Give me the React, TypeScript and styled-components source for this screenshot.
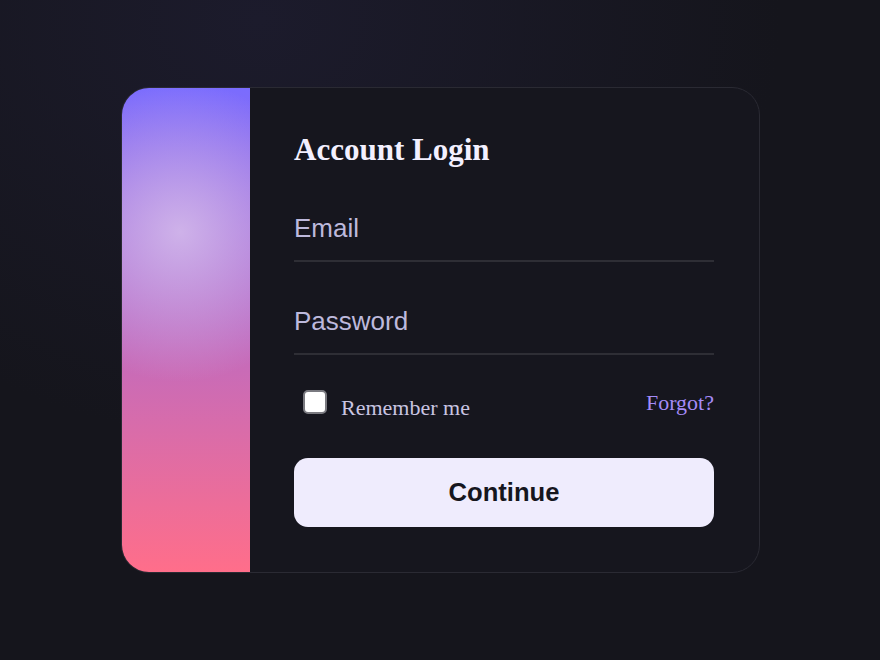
import React from "react";
import styled, { createGlobalStyle } from "styled-components";

const GlobalStyle = createGlobalStyle`
  html, body {
    margin: 0;
    padding: 0;
    height: 100%;
  }
  body {
    background: #15151c;
    font-family: "Liberation Serif", "Times New Roman", serif;
  }
  #root {
    min-height: 100%;
  }
`;

const Page = styled.main`
  width: 880px;
  height: 660px;
  display: flex;
  align-items: center;
  justify-content: center;
  background:
    radial-gradient(ellipse 520px 420px at 260px 20px, #1c1b2c 0%, rgba(28, 27, 44, 0) 100%),
    #15151c;
`;

const Card = styled.section`
  width: 637px;
  display: flex;
  border: 1px solid #2a2a33;
  border-radius: 28px;
  overflow: hidden;
  background: #16161e;
  margin-left: 1px;
`;

const Accent = styled.div`
  width: 128px;
  flex-shrink: 0;
  background:
    radial-gradient(circle 150px at 58px 144px, rgba(214, 190, 236, 0.85) 0%, rgba(214, 190, 236, 0) 100%),
    linear-gradient(180deg, #7a6cfe 0%, #c66bb9 56%, #ff6e8a 100%);
`;

const Form = styled.form`
  flex: 1;
  display: flex;
  flex-direction: column;
  padding: 43px 45px 45px 44px;
`;

const Title = styled.h1`
  margin: 0;
  font-family: "Liberation Serif", "Times New Roman", serif;
  font-size: 31px;
  font-weight: 700;
  line-height: 38px;
  color: #f3f0ff;
`;

const Field = styled.input<{ $gap: number }>`
  display: block;
  width: 100%;
  box-sizing: border-box;
  margin: ${(p) => p.$gap}px 0 0;
  padding: 14px 0 17px;
  border: none;
  border-bottom: 2px solid #2e2e35;
  background: transparent;
  font-family: "Liberation Sans", Arial, sans-serif;
  font-size: 26px;
  line-height: 30px;
  color: #f3f0ff;
  outline: none;

  &::placeholder {
    color: #bdb9dc;
    opacity: 1;
  }
`;

const OptionsRow = styled.div`
  display: flex;
  align-items: flex-start;
  justify-content: space-between;
  margin-top: 35px;
`;

const Remember = styled.label`
  display: flex;
  align-items: flex-start;
  gap: 14px;
  cursor: pointer;
`;

const Check = styled.input`
  appearance: none;
  width: 24px;
  height: 24px;
  margin: 0 0 0 9px;
  box-sizing: border-box;
  border: 2px solid #7a7a80;
  border-radius: 5px;
  background: #ffffff;
`;

const RememberText = styled.span`
  margin-top: 5px;
  font-size: 22px;
  line-height: 25px;
  color: #c9c5e2;
`;

const Forgot = styled.a`
  font-size: 22px;
  line-height: 25px;
  color: #a58bf8;
  text-decoration: none;
`;

const Submit = styled.button`
  margin-top: 38px;
  height: 69px;
  border: none;
  border-radius: 14px;
  background: #efecfd;
  font-family: "Liberation Sans", Arial, sans-serif;
  font-size: 25.6px;
  font-weight: 700;
  color: #16161e;
  cursor: pointer;
`;

export default function App() {
  return (
    <>
      <GlobalStyle />
      <Page>
        <Card>
          <Accent />
          <Form onSubmit={(e) => e.preventDefault()}>
            <Title>Account Login</Title>
            <Field $gap={30} type="email" placeholder="Email" />
            <Field $gap={30} type="password" placeholder="Password" />
            <OptionsRow>
              <Remember>
                <Check type="checkbox" />
                <RememberText>Remember me</RememberText>
              </Remember>
              <Forgot href="#">Forgot?</Forgot>
            </OptionsRow>
            <Submit type="submit">Continue</Submit>
          </Form>
        </Card>
      </Page>
    </>
  );
}
